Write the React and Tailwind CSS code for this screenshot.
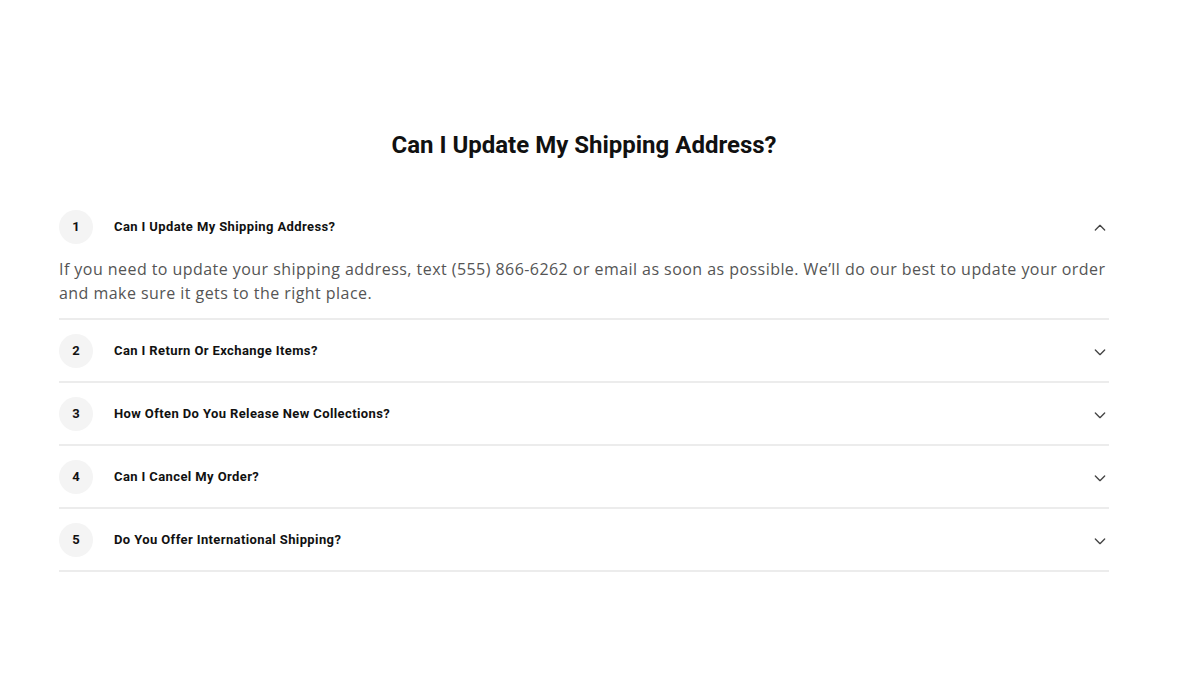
import { useState } from "react";

const faqs = [
  {
    q: "Can I Update My Shipping Address?",
    a: "If you need to update your shipping address, text (555) 866-6262 or email as soon as possible. We\u2019ll do our best to update your order and make sure it gets to the right place.",
  },
  { q: "Can I Return Or Exchange Items?", a: "Unworn items can be returned or exchanged within 30 days of delivery." },
  { q: "How Often Do You Release New Collections?", a: "We drop new collections every season, with smaller capsules in between." },
  { q: "Can I Cancel My Order?", a: "Orders can be cancelled within 2 hours of being placed." },
  { q: "Do You Offer International Shipping?", a: "Yes, we ship to most countries worldwide." },
];

const Chevron = ({ up }) => (
  <svg
    className="w-4 h-4 text-[#444]"
    viewBox="0 0 24 24"
    fill="none"
    stroke="currentColor"
    strokeWidth="2"
    strokeLinecap="round"
    strokeLinejoin="round"
  >
    <path d={up ? "M5 15l7-7 7 7" : "M5 9l7 7 7-7"} />
  </svg>
);

const App = () => {
  const [open, setOpen] = useState(0);

  return (
    <div className="w-[1200px] h-[700px] bg-white pt-[129px]" style={{ fontFamily: "Roboto, sans-serif" }}>
      <div className="mx-[59px] w-[1050px]">
        <h2 className="text-center text-[24px] font-bold text-[#111] leading-[32px]">
          Can I Update My Shipping Address?
        </h2>

        <div className="mt-[35px]">
          {faqs.map((item, i) => (
            <div key={i} className="border-b-2 border-[#ececec]">
              <button
                onClick={() => setOpen(open === i ? -1 : i)}
                className="w-full flex items-center pt-[14px] pb-[13px] text-left"
              >
                <span className="w-[34px] h-[34px] rounded-full bg-[#f4f4f4] flex items-center justify-center text-[13px] font-bold text-[#111]">
                  {i + 1}
                </span>
                <span className="ml-[21px] flex-1 text-[13px] font-bold text-[#111] tracking-[0.03em]">{item.q}</span>
                <span className="mr-[1px] mt-[1px]">
                  <Chevron up={open === i} />
                </span>
              </button>
              {open === i && (
                <p
                  className="pb-[13px] text-[16px] leading-[24px] text-[#555] tracking-[0.028em]"
                  style={{ fontFamily: "'Open Sans', sans-serif" }}
                >
                  {item.a}
                </p>
              )}
            </div>
          ))}
        </div>
      </div>
    </div>
  );
};

export default App;
